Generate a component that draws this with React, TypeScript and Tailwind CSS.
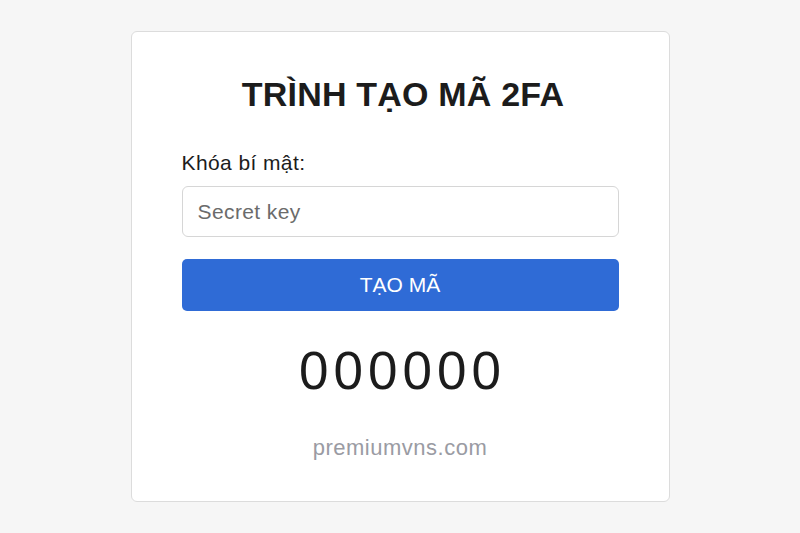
export default function App() {
  return (
    <div className="min-h-[533px] w-full bg-[#f6f6f6] pt-[31px] font-['Liberation_Sans',Arial,sans-serif]">
      <div className="mx-auto w-[539px] h-[471px] rounded-[6px] border border-[#dcdcdc] bg-white px-[50px] pt-[45px]">
        <h1 className="pl-[6px] text-center text-[34px] leading-none font-bold text-[#1c1c1c] tracking-[0.2px]">
          TRÌNH TẠO MÃ 2FA
        </h1>
        <label className="mt-[41px] block text-[21px] leading-none text-[#1c1c1c] tracking-[0.4px]">Khóa bí mật:</label>
        <input
          type="text"
          placeholder="Secret key"
          className="mt-[13px] block h-[51px] w-full rounded-[6px] border border-[#d6d6d6] bg-white px-[15px] text-[21px] tracking-[0.4px] text-[#333] placeholder:text-[#6b6b6b] outline-none"
        />
        <button className="mt-[22px] h-[52px] w-full rounded-[5px] bg-[#2f6bd6] text-[21px] text-white">
          TẠO MÃ
        </button>
        <div className="mt-[33px] pl-[5px] text-center text-[53px] leading-none text-[#1c1c1c] tracking-[5px]">
          000000
        </div>
        <div className="mt-[40px] text-center text-[22px] leading-none text-[#9a9ba3] tracking-[0.5px]">premiumvns.com</div>
      </div>
    </div>
  );
}
